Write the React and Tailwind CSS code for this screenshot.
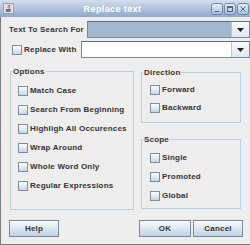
import React from 'react'

const txt = "font-['Liberation_Sans',Arial,sans-serif] font-bold text-[8px] leading-[10px] tracking-[0.2px] text-[#333333]"

function Box() {
  return <span className="w-[10px] h-[10px] shrink-0 border border-[#7d8ea0] bg-gradient-to-b from-white to-[#c4d5e8]" />
}

function Check({ label, h = 'h-[19px]' }) {
  return (
    <div className={`flex items-center ${h}`}>
      <Box />
      <span className={`ml-[2px] ${txt}`}>{label}</span>
    </div>
  )
}

function Arrow() {
  return (
    <div className="w-[18px] h-full flex items-center justify-center border-l border-[#b8c8d8] bg-gradient-to-b from-[#fafafa] to-[#dfe6ee]">
      <svg width="7" height="4" viewBox="0 0 7 4">
        <path d="M0 0H7L3.5 4Z" fill="#222" />
      </svg>
    </div>
  )
}

function Combo({ w, fill }) {
  return (
    <div className={`${w} h-[17px] flex border border-[#7a8a99] border-t-[#5f6f80] ${fill}`}>
      <div className="flex-1" />
      <Arrow />
    </div>
  )
}

function Group({ title, className, inner, children }) {
  return (
    <fieldset className={`border border-[#b8cfe5] px-[1px] ${className}`}>
      <legend className={`px-[1px] leading-[11px] ${txt}`}>{title}</legend>
      <div className={inner}>{children}</div>
    </fieldset>
  )
}

function Button({ label, w }) {
  return (
    <button className={`${w} h-[17px] border border-[#7a8a99] bg-gradient-to-b from-[#fbfcfe] to-[#bfd2e6] ${txt} flex items-center justify-center`}>
      {label}
    </button>
  )
}

function WinBtn({ children }) {
  return (
    <span className="w-[12px] h-[12px] rounded-[3px] border border-[#6e88aa] bg-gradient-to-b from-[#e9f0f8] to-[#a9bfdb] flex items-center justify-center">
      <svg width="8" height="8" viewBox="0 0 8 8" fill="none" stroke="#4d6684" strokeWidth="1">
        {children}
      </svg>
    </span>
  )
}

export default function App() {
  return (
    <div className="w-[250px] h-[245px] flex flex-col bg-[#eeeeee] overflow-hidden">
      <div className="h-[17px] flex items-center bg-gradient-to-b from-[#d3dfee] to-[#8ea9cb] shrink-0">
        <span className="ml-[3px] w-[11px] h-[11px] border border-[#9aa4b0] bg-[#dfe3e8] flex items-center justify-center">
          <svg width="9" height="9" viewBox="0 0 9 9">
            <path d="M4 0.5C5.5 2 3 3 4.5 4.5M5.5 1C6.5 2.5 5 3 5.5 4.5" stroke="#e2561f" strokeWidth="1" fill="none" />
            <path d="M1.5 5H7L6.3 8H2.2Z" fill="#5a7ab0" />
          </svg>
        </span>
        <span className="flex-1 text-center font-['Liberation_Sans',Arial,sans-serif] font-bold text-[9px] leading-[12px] tracking-[0.4px] text-white">
          Replace text
        </span>
        <div className="flex gap-[1px] mr-[1px]">
          <WinBtn><path d="M1.5 6.5H6.5" /></WinBtn>
          <WinBtn><rect x="1.5" y="1.5" width="5" height="5" /><path d="M1.5 2.5H6.5" /></WinBtn>
          <WinBtn><path d="M1.5 1.5L6.5 6.5M6.5 1.5L1.5 6.5" /></WinBtn>
        </div>
      </div>

      <div className="flex-1 flex flex-col border-l border-b border-[#7b7b7b]">
        <div className="mt-[4px] flex items-center pl-[8px]">
          <span className={txt}>Text To Search For</span>
          <div className="ml-auto">
            <Combo w="w-[163px]" fill="bg-[#a3b8cf]" />
          </div>
        </div>

        <div className="mt-[3px] flex items-center pl-[11px]">
          <Box />
          <span className={`ml-[2px] ${txt}`}>Replace With</span>
          <div className="ml-auto">
            <Combo w="w-[169px]" fill="bg-white" />
          </div>
        </div>

        <div className="mt-[8px] flex pl-[9px]">
          <Group title="Options" className="w-[124px] h-[144px]" inner="pl-[6px] pt-[4px]">
            <Check label="Match Case" />
            <Check label="Search From Beginning" />
            <Check label="Highligh All Occurences" />
            <Check label="Wrap Around" />
            <Check label="Whole Word Only" />
            <Check label="Regular Expressions" />
          </Group>
          <div className="ml-[7px] mt-[1px] w-[100px] flex flex-col">
            <Group title="Direction" className="h-[56px]" inner="pl-[7px] pt-[3px]">
              <Check label="Forward" h="h-[18px]" />
              <Check label="Backward" h="h-[18px]" />
            </Group>
            <Group title="Scope" className="mt-[11px] h-[75px]" inner="pl-[7px] pt-[3px]">
              <Check label="Single" />
              <Check label="Promoted" />
              <Check label="Global" />
            </Group>
          </div>
        </div>

        <div className="mt-[10px] flex pl-[8px] pr-[7px]">
          <Button label="Help" w="w-[50px]" />
          <div className="ml-auto flex gap-[2px]">
            <Button label="OK" w="w-[52px]" />
            <Button label="Cancel" w="w-[50px]" />
          </div>
        </div>
      </div>
    </div>
  )
}
